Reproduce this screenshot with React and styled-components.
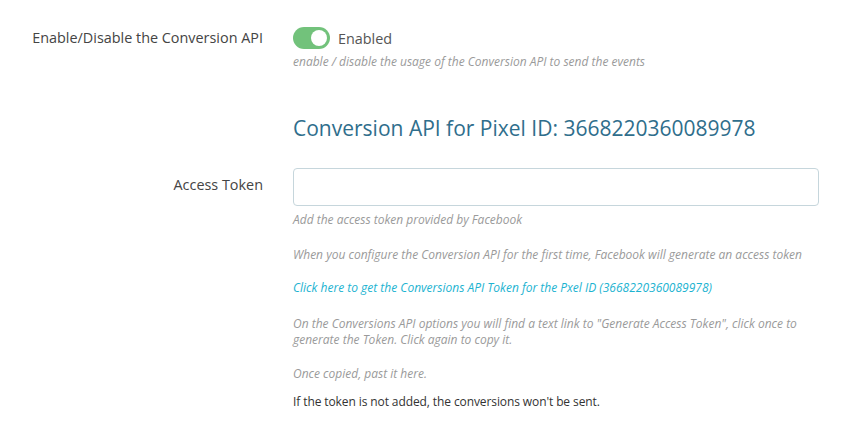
import React, { useState } from "react";
import styled, { createGlobalStyle } from "styled-components";

const GlobalStyle = createGlobalStyle`
  html, body {
    margin: 0;
    padding: 0;
    background: #ffffff;
    font-family: "Open Sans", "Noto Sans", sans-serif;
  }
`;

const Page = styled.div`
  padding-top: 27px;
  width: 843px;
`;

const Row = styled.div`
  display: grid;
  grid-template-columns: 263px 526px;
  column-gap: 30px;
`;

const Label = styled.label`
  text-align: right;
  font-size: 14.4px;
  line-height: ${(p) => p.$lh || 22}px;
  color: #444;
  white-space: nowrap;
`;

const Field = styled.div`
  display: flex;
  flex-direction: column;
`;

const SwitchLine = styled.div`
  display: flex;
  align-items: center;
  gap: 8px;
  height: 22px;
`;

const Switch = styled.button`
  position: relative;
  width: 37px;
  height: 22px;
  border: none;
  padding: 0;
  border-radius: 11px;
  background: ${(p) => (p.$on ? "#72c27b" : "#c9ced3")};
  cursor: pointer;

  &:before {
    content: "";
    position: absolute;
    top: 3px;
    left: ${(p) => (p.$on ? "18px" : "3px")};
    width: 16px;
    height: 16px;
    border-radius: 50%;
    background: #fff;
    transition: left 0.2s;
  }
`;

const SwitchText = styled.span`
  font-size: 14.4px;
  color: #555;
`;

const Help = styled.p`
  margin: ${(p) => p.$mt || 0}px 0 0;
  font-size: 12px;
  line-height: 16px;
  font-style: italic;
  color: #9a9a9a;
`;

const HelpLink = styled.a`
  display: block;
  margin-top: ${(p) => p.$mt || 0}px;
  font-size: 12px;
  line-height: 16px;
  font-style: italic;
  color: #1cb3d1;
  text-decoration: none;
`;

const Note = styled.p`
  margin: ${(p) => p.$mt || 0}px 0 0;
  font-size: 12px;
  line-height: 16px;
  letter-spacing: -0.1px;
  color: #333;
`;

const Heading = styled.h3`
  margin: 44px 0 26px 293px;
  font-size: 21px;
  line-height: 28px;
  font-weight: 400;
  color: #2f6e8c;
`;

const Input = styled.input`
  box-sizing: border-box;
  width: 526px;
  height: 38px;
  border: 1px solid #c6d6dc;
  border-radius: 4px;
  padding: 0 10px;
  font-size: 13px;
  outline: none;
`;

export default function App() {
  const [enabled, setEnabled] = useState(true);
  const [token, setToken] = useState("");

  return (
    <Page>
      <GlobalStyle />
      <Row>
        <Label>Enable/Disable the Conversion API</Label>
        <Field>
          <SwitchLine>
            <Switch $on={enabled} onClick={() => setEnabled(!enabled)} />
            <SwitchText>{enabled ? "Enabled" : "Disabled"}</SwitchText>
          </SwitchLine>
          <Help $mt={5}>enable / disable the usage of the Conversion API to send the events</Help>
        </Field>
      </Row>

      <Heading>Conversion API for Pixel ID: 3668220360089978</Heading>

      <Row>
        <Label $lh={34}>Access Token</Label>
        <Field>
          <Input value={token} onChange={(e) => setToken(e.target.value)} />
          <Help $mt={6}>Add the access token provided by Facebook</Help>
          <Help $mt={19}>
            When you configure the Conversion API for the first time, Facebook will generate an access token
          </Help>
          <HelpLink $mt={17} href="#">
            Click here to get the Conversions API Token for the Pxel ID (3668220360089978)
          </HelpLink>
          <Help $mt={20}>
            On the Conversions API options you will find a text link to "Generate Access Token", click once to
            generate the Token. Click again to copy it.
          </Help>
          <Help $mt={18}>Once copied, past it here.</Help>
          <Note $mt={12}>If the token is not added, the conversions won't be sent.</Note>
        </Field>
      </Row>
    </Page>
  );
}
